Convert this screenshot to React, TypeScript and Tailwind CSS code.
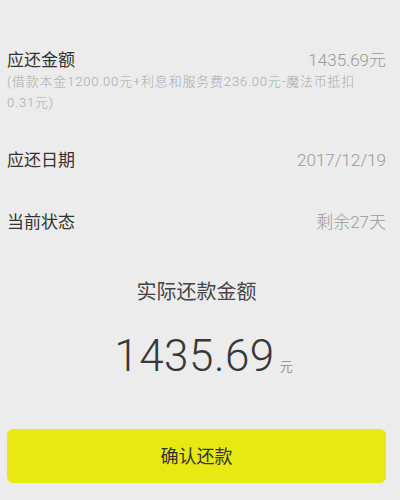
import React from 'react';

const rows = [
  { label: '应还日期', value: '2017/12/19' },
  { label: '当前状态', value: '剩余27天' },
];

const App = () => {
  return (
    <div
      className="min-h-[500px] bg-[#ececec] pl-[7px] pr-[14px]"
      style={{ fontFamily: 'Roboto, "Noto Sans CJK SC", sans-serif' }}
    >
      {/* amount due */}
      <div className="pt-[49px]">
        <div className="flex items-center justify-between leading-[22px]">
          <span className="text-[17px] text-[#333]">应还金额</span>
          <span className="text-[17px] font-light text-[#9a9a9a]">1435.69元</span>
        </div>
        <p className="text-[13px] font-light leading-[21px] tracking-[0.8px] text-[#aaa]">
          (借款本金1200.00元+利息和服务费236.00元-魔法币抵扣
          <br />
          0.31元)
        </p>
      </div>

      {rows.map((row, i) => (
        <div
          key={row.label}
          className={`flex items-center justify-between leading-[22px] ${i === 0 ? 'mt-[36px]' : 'mt-[40px]'}`}
        >
          <span className="text-[17px] text-[#333]">{row.label}</span>
          <span className="text-[17px] font-light text-[#9a9a9a]">{row.value}</span>
        </div>
      ))}

      {/* actual repayment */}
      <div className="mt-[45px] text-center text-[20px] leading-[28px] text-[#444]">实际还款金额</div>
      <div className="mt-[24px] flex items-baseline justify-center pl-[14px] leading-[52px] text-[#383838]">
        <span className="text-[44px] font-light tracking-[0.5px]">1435.69</span>
        <span className="ml-[5px] text-[13px] text-[#999]">元</span>
      </div>

      <button className="mt-[36px] flex h-[54px] w-full items-center justify-center rounded-[6px] bg-[#e8e812] text-[18px] text-[#333]">
        确认还款
      </button>
    </div>
  );
};

export default App;
